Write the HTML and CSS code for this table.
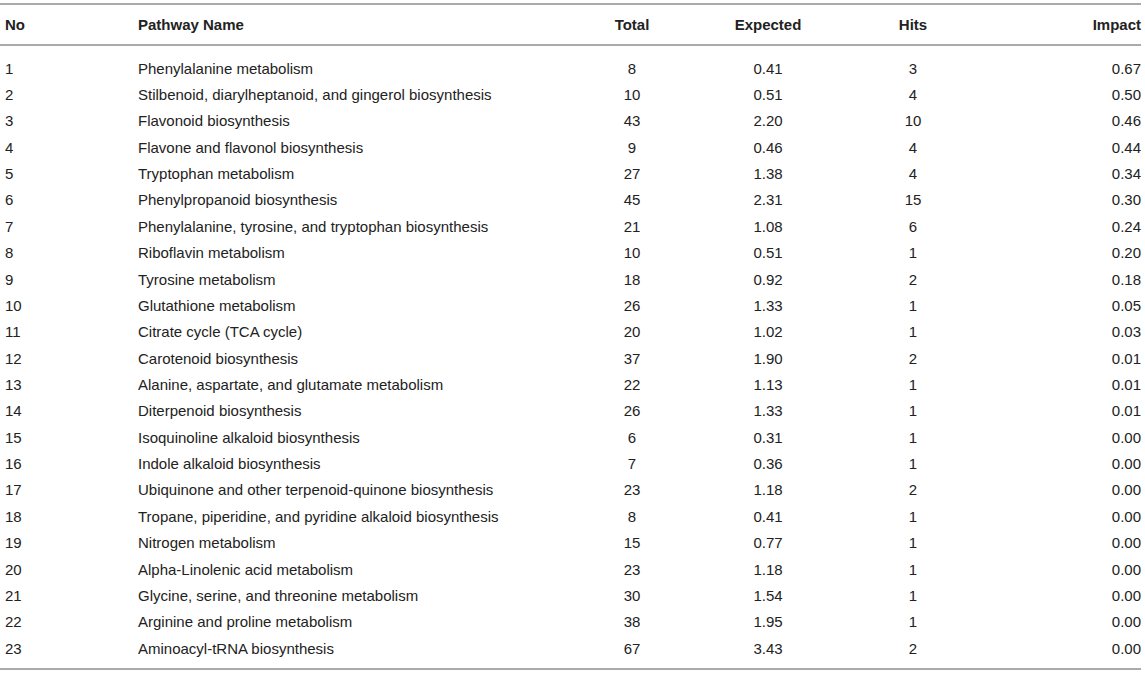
FILE: index.html
```html
<!DOCTYPE html>
<html>
<head>
    <meta charset="utf-8">
    <title>Pathway analysis</title>
    <link rel="stylesheet" href="styles.css">
</head>
<body>
    <table class="pathways">
        <colgroup>
            <col class="c-no">
            <col class="c-name">
            <col class="c-total">
            <col class="c-exp">
            <col class="c-hits">
            <col class="c-impact">
        </colgroup>
        <thead>
            <tr>
                <th class="left">No</th>
                <th class="left">Pathway Name</th>
                <th>Total</th>
                <th>Expected</th>
                <th>Hits</th>
                <th class="right">Impact</th>
            </tr>
        </thead>
        <tbody>
            <tr><td>1</td><td>Phenylalanine metabolism</td><td>8</td><td>0.41</td><td>3</td><td>0.67</td></tr>
            <tr><td>2</td><td>Stilbenoid, diarylheptanoid, and gingerol biosynthesis</td><td>10</td><td>0.51</td><td>4</td><td>0.50</td></tr>
            <tr><td>3</td><td>Flavonoid biosynthesis</td><td>43</td><td>2.20</td><td>10</td><td>0.46</td></tr>
            <tr><td>4</td><td>Flavone and flavonol biosynthesis</td><td>9</td><td>0.46</td><td>4</td><td>0.44</td></tr>
            <tr><td>5</td><td>Tryptophan metabolism</td><td>27</td><td>1.38</td><td>4</td><td>0.34</td></tr>
            <tr><td>6</td><td>Phenylpropanoid biosynthesis</td><td>45</td><td>2.31</td><td>15</td><td>0.30</td></tr>
            <tr><td>7</td><td>Phenylalanine, tyrosine, and tryptophan biosynthesis</td><td>21</td><td>1.08</td><td>6</td><td>0.24</td></tr>
            <tr><td>8</td><td>Riboflavin metabolism</td><td>10</td><td>0.51</td><td>1</td><td>0.20</td></tr>
            <tr><td>9</td><td>Tyrosine metabolism</td><td>18</td><td>0.92</td><td>2</td><td>0.18</td></tr>
            <tr><td>10</td><td>Glutathione metabolism</td><td>26</td><td>1.33</td><td>1</td><td>0.05</td></tr>
            <tr><td>11</td><td>Citrate cycle (TCA cycle)</td><td>20</td><td>1.02</td><td>1</td><td>0.03</td></tr>
            <tr><td>12</td><td>Carotenoid biosynthesis</td><td>37</td><td>1.90</td><td>2</td><td>0.01</td></tr>
            <tr><td>13</td><td>Alanine, aspartate, and glutamate metabolism</td><td>22</td><td>1.13</td><td>1</td><td>0.01</td></tr>
            <tr><td>14</td><td>Diterpenoid biosynthesis</td><td>26</td><td>1.33</td><td>1</td><td>0.01</td></tr>
            <tr><td>15</td><td>Isoquinoline alkaloid biosynthesis</td><td>6</td><td>0.31</td><td>1</td><td>0.00</td></tr>
            <tr><td>16</td><td>Indole alkaloid biosynthesis</td><td>7</td><td>0.36</td><td>1</td><td>0.00</td></tr>
            <tr><td>17</td><td>Ubiquinone and other terpenoid-quinone biosynthesis</td><td>23</td><td>1.18</td><td>2</td><td>0.00</td></tr>
            <tr><td>18</td><td>Tropane, piperidine, and pyridine alkaloid biosynthesis</td><td>8</td><td>0.41</td><td>1</td><td>0.00</td></tr>
            <tr><td>19</td><td>Nitrogen metabolism</td><td>15</td><td>0.77</td><td>1</td><td>0.00</td></tr>
            <tr><td>20</td><td>Alpha-Linolenic acid metabolism</td><td>23</td><td>1.18</td><td>1</td><td>0.00</td></tr>
            <tr><td>21</td><td>Glycine, serine, and threonine metabolism</td><td>30</td><td>1.54</td><td>1</td><td>0.00</td></tr>
            <tr><td>22</td><td>Arginine and proline metabolism</td><td>38</td><td>1.95</td><td>1</td><td>0.00</td></tr>
            <tr><td>23</td><td>Aminoacyl-tRNA biosynthesis</td><td>67</td><td>3.43</td><td>2</td><td>0.00</td></tr>
        </tbody>
    </table>
</body>
</html>
```

FILE: styles.css
```css
body {
    margin: 0;
    padding-top: 3px;
    background: #fff;
    color: #222;
    font-family: "Liberation Sans", Arial, sans-serif;
    font-size: 15px;
}

.pathways {
    width: 1141px;
    border-collapse: collapse;
    table-layout: fixed;
    border-top: 2px solid #aaa;
    border-bottom: 2px solid #aaa;
}

.c-no { width: 138px; }
.c-name { width: 440px; }
.c-total { width: 108px; }
.c-exp { width: 164px; }
.c-hits { width: 126px; }
.c-impact { width: 165px; }

.pathways th {
    height: 39px;
    padding: 0;
    font-weight: bold;
    text-align: center;
    border-bottom: 2px solid #aaa;
}

.pathways td {
    height: 26.36px;
    padding: 0;
    text-align: center;
    white-space: nowrap;
}

.pathways th.left,
.pathways td:nth-child(1),
.pathways td:nth-child(2) {
    text-align: left;
}

.pathways th:first-child,
.pathways td:first-child {
    padding-left: 5px;
}

.pathways th.right,
.pathways td:last-child {
    text-align: right;
}

.pathways tbody tr:first-child td {
    padding-top: 9px;
}

.pathways tbody tr:last-child td {
    padding-bottom: 7px;
}
```
